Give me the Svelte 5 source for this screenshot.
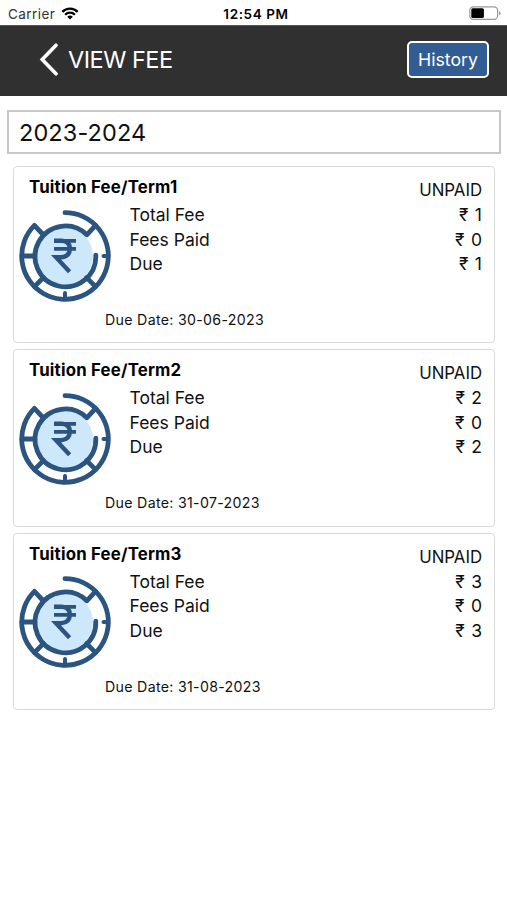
<script lang="ts">
	interface Fee {
		title: string;
		status: string;
		total: number;
		paid: number;
		due: number;
		dueDate: string;
	}

	let session = $state('2023-2024');

	const fees: Fee[] = [
		{ title: 'Tuition Fee/Term1', status: 'UNPAID', total: 1, paid: 0, due: 1, dueDate: '30-06-2023' },
		{ title: 'Tuition Fee/Term2', status: 'UNPAID', total: 2, paid: 0, due: 2, dueDate: '31-07-2023' },
		{ title: 'Tuition Fee/Term3', status: 'UNPAID', total: 3, paid: 0, due: 3, dueDate: '31-08-2023' },
	];
</script>

<div class="screen">
	<div class="status-bar">
		<div class="carrier">
			<span>Carrier</span>
			<svg width="18" height="13" viewBox="0 0 18 13" fill="none" stroke="#000" stroke-width="2.3">
				<path d="M1.3 4.9a10.9 10.9 0 0 1 15.4 0" />
				<path d="M4.1 7.7a6.9 6.9 0 0 1 9.8 0" />
				<path d="M9 12.6 6.2 9.8a4 4 0 0 1 5.6 0z" fill="#000" stroke="none" />
			</svg>
		</div>
		<span class="time">12:54 PM</span>
		<svg class="battery" width="32" height="15" viewBox="0 0 32 15">
			<rect x="0.8" y="0.8" width="27.8" height="12.6" rx="3.6" fill="#fff" stroke="#999" stroke-width="1.2" />
			<rect x="2.3" y="2.3" width="12.6" height="9.6" rx="1.5" fill="#000" />
			<path d="M30 5v4.4q1.5-.7 1.5-2.2T30 5z" fill="#999" />
		</svg>
	</div>

	<header>
		<button class="back" aria-label="Back">
			<svg width="20" height="34" viewBox="0 0 20 34" fill="none" stroke="#fff" stroke-width="3.6" stroke-linecap="round" stroke-linejoin="miter">
				<path d="M17 2.2 3.2 16.5 17 30.8" />
			</svg>
		</button>
		<h1>VIEW FEE</h1>
		<button class="history">History</button>
	</header>

	<div class="session">{session}</div>

	<div class="list">
		{#each fees as fee}
			<div class="card">
				<div class="card-head">
					<h2>{fee.title}</h2>
					<span class="status">{fee.status}</span>
				</div>
				<div class="card-body">
					<svg class="coin" width="92" height="92" viewBox="-46 -46 92 92" fill="none" stroke="#2b5480" stroke-width="4.8" stroke-linecap="round" stroke-linejoin="round">
						<circle cx="-1" cy="0" r="29" fill="#cde8fb" stroke="none" />
						<path d="M0-43.3A43.3 43.3 0 1 1-30.6-30.6L-22-21.5" />
						<path d="M30.6-30.6 21.8-21.2A30.4 30.4 0 1 0 30.8-.8" />
						<path d="M-43 0h13M-30.6 30.6l9-9M30.6 30.6l-9-9" />
						<path d="M0 43v-6M43 0h-4.5" stroke-width="4" />
						<path d="M-11-15.2h22M-11-7.2h22" stroke-width="3.8" stroke-linecap="butt" />
						<path d="M-11-15.2H-4Q4.8-15.2 4.8-7.2T-4 1.2h-5L4.6 15.8" stroke-width="4.4" stroke-linecap="butt" stroke-linejoin="miter" />
					</svg>
					<dl>
						<div class="row"><dt>Total Fee</dt><dd>₹ {fee.total}</dd></div>
						<div class="row"><dt>Fees Paid</dt><dd>₹ {fee.paid}</dd></div>
						<div class="row"><dt>Due</dt><dd>₹ {fee.due}</dd></div>
					</dl>
				</div>
				<p class="due-date">Due Date: {fee.dueDate}</p>
			</div>
		{/each}
	</div>
</div>

<style>
	:global(body) {
		background: #fff;
	}

	.screen {
		min-height: 900px;
		font-family: Inter, 'Liberation Sans', sans-serif;
		color: #111;
	}

	.status-bar {
		display: grid;
		grid-template-columns: 1fr auto 1fr;
		align-items: center;
		box-sizing: border-box;
		height: 25px;
		padding: 2px 6px 0 8px;
		font-size: 13px;
	}

	.carrier {
		display: flex;
		align-items: center;
		gap: 6px;
		color: #333;
		font-size: 13.5px;
		letter-spacing: 0.45px;
	}

	.time {
		font-size: 13.5px;
		font-weight: 600;
		color: #000;
		letter-spacing: 0.6px;
		padding-left: 3px;
	}

	.battery {
		justify-self: end;
	}

	header {
		display: flex;
		align-items: center;
		box-sizing: border-box;
		height: 71px;
		padding: 0 18px 3px 39px;
		background: #303030;
		border-top: 1px solid #555;
	}

	button {
		font-family: inherit;
		color: #fff;
	}

	.back {
		display: flex;
		padding: 0;
		background: none;
		border: none;
	}

	h1 {
		flex: 1;
		margin: 0 0 0 9px;
		font-size: 23.5px;
		font-weight: 400;
		letter-spacing: -0.5px;
		color: #fff;
	}

	.history {
		width: 82px;
		height: 37px;
		padding: 0;
		font-size: 17.7px;
		background: #325d94;
		border: 2px solid #fff;
		border-radius: 5px;
	}

	.session {
		box-sizing: border-box;
		height: 44px;
		margin: 14px 6px 0 7px;
		padding-left: 10px;
		border: 2px solid #c8c8c8;
		font-size: 23.5px;
		line-height: 42px;
		letter-spacing: 0.1px;
	}

	.list {
		display: flex;
		flex-direction: column;
		gap: 6px;
		padding: 12px 12px 0 13px;
	}

	.card {
		box-sizing: border-box;
		height: 177.3px;
		border: 1px solid #dadada;
		border-radius: 4px;
	}

	.card-head {
		display: flex;
		justify-content: space-between;
		height: 36px;
		padding: 0 12px 0 15px;
	}

	h2 {
		margin: 0;
		font-size: 16.8px;
		font-weight: 700;
		line-height: 41px;
		letter-spacing: 0.2px;
		color: #000;
	}

	.status {
		font-size: 16.8px;
		line-height: 46px;
	}

	.card-body {
		display: flex;
		height: 104px;
		padding: 0 12px 0 5px;
	}

	.coin {
		flex: none;
		margin-top: 6.6px;
	}

	dl {
		flex: 1;
		margin: 0 0 0 18.5px;
		font-size: 17.5px;
	}

	.row {
		display: flex;
		justify-content: space-between;
		line-height: 24.5px;
	}

	dd {
		margin: 0;
		word-spacing: 1.5px;
	}

	.due-date {
		margin: 0 0 0 91px;
		font-size: 14.2px;
		line-height: 26.4px;
		letter-spacing: 0.3px;
	}
</style>
